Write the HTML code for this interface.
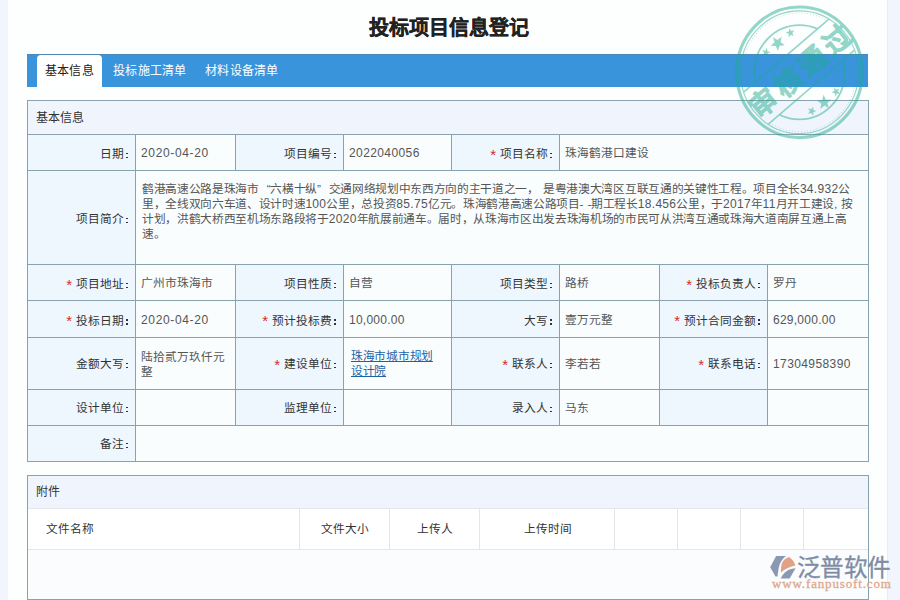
<!DOCTYPE html>
<html lang="zh-CN"><head><meta charset="utf-8">
<style>
*{margin:0;padding:0;box-sizing:border-box}
html,body{width:900px;height:600px;overflow:hidden}
body{background:#f1f5fd;font-family:"Liberation Sans",sans-serif;font-size:11.7px;color:#333;position:relative}
.a{position:absolute}
.main{position:absolute;left:8px;top:0;width:879px;height:600px;background:#fdfefe}
.title{position:absolute;left:0;top:14px;width:897px;text-align:center;font-size:20px;font-weight:bold;color:#222;line-height:28px;letter-spacing:0;-webkit-text-stroke:.35px #222}
.tabbar{position:absolute;left:27px;top:54px;width:841px;height:33px;background:#3a94dc;border-top:1px solid #4a88b8}
.tab{position:absolute;top:0;height:32px;line-height:32px;color:#fff;letter-spacing:.3px;font-size:12px}
.tab.act{background:#fff;color:#222;border-radius:4px 4px 0 0;left:10px;width:65px;text-align:center}
.lab{display:flex;align-items:center;color:#333;white-space:nowrap}
.v{display:flex;align-items:center;color:#555;line-height:15px}
.link span{color:#1c64a8;text-decoration:underline;letter-spacing:-.3px}
.star{color:#d9281f;margin-right:4px;font-size:15px;position:relative;top:2px;line-height:12px}
.cl{display:inline-block;position:relative;width:2px;height:12px;margin-left:2px}
.cl:before,.cl:after{content:"";position:absolute;left:0;width:1.6px;height:1.8px;background:#333}
.cl:before{top:6.2px}.cl:after{top:10.2px}
.n{font-size:12px;letter-spacing:.4px;line-height:10px}
.h12{font-size:12px}
.qo,.qc{display:inline-block;width:11.65px}
.qo{text-align:right}
.desc{letter-spacing:-.33px;word-spacing:1.5px}
.desc .n{letter-spacing:.3px}
.n.d{letter-spacing:.65px}
.n.m{letter-spacing:.25px}
</style></head><body>
<div class="main"></div><div class="a" style="left:887px;top:0;width:1px;height:600px;background:#e9edf2"></div>
<div class="title">投标项目信息登记</div>
<div class="tabbar">
  <div class="tab act">基本信息</div>
  <div class="tab" style="left:86px">投标施工清单</div>
  <div class="tab" style="left:178px">材料设备清单</div>
</div>
<div class="a" style="left:27px;top:100px;width:841px;height:34px;background:#f0f5fd"></div>
<div class="a t h12" style="left:36px;top:101px;height:34px;line-height:34px;color:#333">基本信息</div>
<div class="a" style="left:27px;top:134px;width:108px;height:36px;background:#eff7fe"></div>
<div class="a lab" style="right:772px;top:135px;height:35px">日期<i class="cl"></i></div>
<div class="a" style="left:135px;top:134px;width:100px;height:36px;background:#f9fdfe"></div>
<div class="a v" style="left:141px;top:135px;height:35px;width:86px"><span><span class="n d">2020-04-20</span></span></div>
<div class="a" style="left:235px;top:134px;width:108px;height:36px;background:#eff7fe"></div>
<div class="a lab" style="right:564px;top:135px;height:35px">项目编号<i class="cl"></i></div>
<div class="a" style="left:343px;top:134px;width:108px;height:36px;background:#f9fdfe"></div>
<div class="a v" style="left:349px;top:135px;height:35px;width:94px"><span><span class="n">2022040056</span></span></div>
<div class="a" style="left:451px;top:134px;width:108px;height:36px;background:#eff7fe"></div>
<div class="a lab" style="right:348px;top:135px;height:35px"><span class="star">*</span>项目名称<i class="cl"></i></div>
<div class="a" style="left:559px;top:134px;width:309px;height:36px;background:#f9fdfe"></div>
<div class="a v" style="left:565px;top:135px;height:35px;width:295px"><span>珠海鹤港口建设</span></div>
<div class="a" style="left:27px;top:170px;width:108px;height:94px;background:#eff7fe"></div>
<div class="a lab" style="right:772px;top:171px;height:93px">项目简介<i class="cl"></i></div>
<div class="a" style="left:135px;top:170px;width:733px;height:94px;background:#f9fdfe"></div>
<div class="a" style="left:27px;top:264px;width:108px;height:36px;background:#eff7fe"></div>
<div class="a lab" style="right:772px;top:265px;height:35px"><span class="star">*</span>项目地址<i class="cl"></i></div>
<div class="a" style="left:135px;top:264px;width:100px;height:36px;background:#f9fdfe"></div>
<div class="a v" style="left:141px;top:265px;height:35px;width:86px"><span>广州市珠海市</span></div>
<div class="a" style="left:235px;top:264px;width:108px;height:36px;background:#eff7fe"></div>
<div class="a lab" style="right:564px;top:265px;height:35px">项目性质<i class="cl"></i></div>
<div class="a" style="left:343px;top:264px;width:108px;height:36px;background:#f9fdfe"></div>
<div class="a v" style="left:349px;top:265px;height:35px;width:94px"><span>自营</span></div>
<div class="a" style="left:451px;top:264px;width:108px;height:36px;background:#eff7fe"></div>
<div class="a lab" style="right:348px;top:265px;height:35px">项目类型<i class="cl"></i></div>
<div class="a" style="left:559px;top:264px;width:100px;height:36px;background:#f9fdfe"></div>
<div class="a v" style="left:565px;top:265px;height:35px;width:86px"><span>路桥</span></div>
<div class="a" style="left:659px;top:264px;width:108px;height:36px;background:#eff7fe"></div>
<div class="a lab" style="right:140px;top:265px;height:35px"><span class="star">*</span>投标负责人<i class="cl"></i></div>
<div class="a" style="left:767px;top:264px;width:101px;height:36px;background:#f9fdfe"></div>
<div class="a v" style="left:773px;top:265px;height:35px;width:87px"><span>罗丹</span></div>
<div class="a" style="left:27px;top:300px;width:108px;height:37px;background:#eff7fe"></div>
<div class="a lab" style="right:772px;top:301px;height:36px"><span class="star">*</span>投标日期<i class="cl"></i></div>
<div class="a" style="left:135px;top:300px;width:100px;height:37px;background:#f9fdfe"></div>
<div class="a v" style="left:141px;top:301px;height:36px;width:86px"><span><span class="n d">2020-04-20</span></span></div>
<div class="a" style="left:235px;top:300px;width:108px;height:37px;background:#eff7fe"></div>
<div class="a lab" style="right:564px;top:301px;height:36px"><span class="star">*</span>预计投标费<i class="cl"></i></div>
<div class="a" style="left:343px;top:300px;width:108px;height:37px;background:#f9fdfe"></div>
<div class="a v" style="left:349px;top:301px;height:36px;width:94px"><span><span class="n m">10,000.00</span></span></div>
<div class="a" style="left:451px;top:300px;width:108px;height:37px;background:#eff7fe"></div>
<div class="a lab" style="right:348px;top:301px;height:36px">大写<i class="cl"></i></div>
<div class="a" style="left:559px;top:300px;width:100px;height:37px;background:#f9fdfe"></div>
<div class="a v" style="left:565px;top:301px;height:36px;width:86px"><span>壹万元整</span></div>
<div class="a" style="left:659px;top:300px;width:108px;height:37px;background:#eff7fe"></div>
<div class="a lab" style="right:140px;top:301px;height:36px"><span class="star">*</span>预计合同金额<i class="cl"></i></div>
<div class="a" style="left:767px;top:300px;width:101px;height:37px;background:#f9fdfe"></div>
<div class="a v" style="left:773px;top:301px;height:36px;width:87px"><span><span class="n m">629,000.00</span></span></div>
<div class="a" style="left:27px;top:337px;width:108px;height:52px;background:#eff7fe"></div>
<div class="a lab" style="right:772px;top:337px;height:51px">金额大写<i class="cl"></i></div>
<div class="a" style="left:135px;top:337px;width:100px;height:52px;background:#f9fdfe"></div>
<div class="a v" style="left:141px;top:338px;height:51px;width:86px"><span>陆拾贰万玖仟元<br>整</span></div>
<div class="a" style="left:235px;top:337px;width:108px;height:52px;background:#eff7fe"></div>
<div class="a lab" style="right:564px;top:337px;height:51px"><span class="star">*</span>建设单位<i class="cl"></i></div>
<div class="a" style="left:343px;top:337px;width:108px;height:52px;background:#f9fdfe"></div>
<div class="a v link" style="left:351px;top:337px;height:51px;width:94px"><span>珠海市城市规划<br>设计院</span></div>
<div class="a" style="left:451px;top:337px;width:108px;height:52px;background:#eff7fe"></div>
<div class="a lab" style="right:348px;top:337px;height:51px"><span class="star">*</span>联系人<i class="cl"></i></div>
<div class="a" style="left:559px;top:337px;width:100px;height:52px;background:#f9fdfe"></div>
<div class="a v" style="left:565px;top:338px;height:51px;width:86px"><span>李若若</span></div>
<div class="a" style="left:659px;top:337px;width:108px;height:52px;background:#eff7fe"></div>
<div class="a lab" style="right:140px;top:337px;height:51px"><span class="star">*</span>联系电话<i class="cl"></i></div>
<div class="a" style="left:767px;top:337px;width:101px;height:52px;background:#f9fdfe"></div>
<div class="a v" style="left:773px;top:338px;height:51px;width:87px"><span><span class="n">17304958390</span></span></div>
<div class="a" style="left:27px;top:389px;width:108px;height:36px;background:#eff7fe"></div>
<div class="a lab" style="right:772px;top:389px;height:35px">设计单位<i class="cl"></i></div>
<div class="a" style="left:135px;top:389px;width:100px;height:36px;background:#f9fdfe"></div>
<div class="a" style="left:235px;top:389px;width:108px;height:36px;background:#eff7fe"></div>
<div class="a lab" style="right:564px;top:389px;height:35px">监理单位<i class="cl"></i></div>
<div class="a" style="left:343px;top:389px;width:108px;height:36px;background:#f9fdfe"></div>
<div class="a" style="left:451px;top:389px;width:108px;height:36px;background:#eff7fe"></div>
<div class="a lab" style="right:348px;top:389px;height:35px">录入人<i class="cl"></i></div>
<div class="a" style="left:559px;top:389px;width:100px;height:36px;background:#f9fdfe"></div>
<div class="a v" style="left:565px;top:390px;height:35px;width:86px"><span>马东</span></div>
<div class="a" style="left:659px;top:389px;width:108px;height:36px;background:#eff7fe"></div>
<div class="a" style="left:767px;top:389px;width:101px;height:36px;background:#f9fdfe"></div>
<div class="a" style="left:27px;top:425px;width:108px;height:36px;background:#eff7fe"></div>
<div class="a lab" style="right:772px;top:425px;height:35px">备注<i class="cl"></i></div>
<div class="a" style="left:135px;top:425px;width:733px;height:36px;background:#f9fdfe"></div>
<div class="a desc" style="left:142px;top:181px;line-height:15px;white-space:nowrap;color:#555">鹤港高速公路是珠海市<span class="qo">“</span>六横十纵<span class="qc">”</span>交通网络规划中东西方向的主干道之一， 是粤港澳大湾区互联互通的关键性工程。项目全长<span class="n">34.932</span>公<br>里，全线双向六车道、设计时速<span class="n">100</span>公里，总投资<span class="n">85.75</span>亿元。珠海鹤港高速公路项目- -期工程长<span class="n">18.456</span>公里，于<span class="n">2017</span>年<span class="n">11</span>月开工建设, 按<br>计划，洪鹤大桥西至机场东路段将于<span class="n">2020</span>年航展前通车。届时，从珠海市区出发去珠海机场的市民可从洪湾互通或珠海大道南屏互通上高<br>速。</div>
<div class="a" style="left:27px;top:100px;width:842px;height:1px;background:#89a3ae"></div>
<div class="a" style="left:27px;top:134px;width:842px;height:1px;background:#89a3ae"></div>
<div class="a" style="left:27px;top:170px;width:842px;height:1px;background:#89a3ae"></div>
<div class="a" style="left:27px;top:264px;width:842px;height:1px;background:#89a3ae"></div>
<div class="a" style="left:27px;top:300px;width:842px;height:1px;background:#89a3ae"></div>
<div class="a" style="left:27px;top:337px;width:842px;height:1px;background:#89a3ae"></div>
<div class="a" style="left:27px;top:389px;width:842px;height:1px;background:#89a3ae"></div>
<div class="a" style="left:27px;top:425px;width:842px;height:1px;background:#89a3ae"></div>
<div class="a" style="left:27px;top:461px;width:842px;height:1px;background:#89a3ae"></div>
<div class="a" style="left:27px;top:134px;width:1px;height:36px;background:#89a3ae"></div>
<div class="a" style="left:135px;top:134px;width:1px;height:36px;background:#89a3ae"></div>
<div class="a" style="left:235px;top:134px;width:1px;height:36px;background:#89a3ae"></div>
<div class="a" style="left:343px;top:134px;width:1px;height:36px;background:#89a3ae"></div>
<div class="a" style="left:451px;top:134px;width:1px;height:36px;background:#89a3ae"></div>
<div class="a" style="left:559px;top:134px;width:1px;height:36px;background:#89a3ae"></div>
<div class="a" style="left:868px;top:134px;width:1px;height:36px;background:#89a3ae"></div>
<div class="a" style="left:27px;top:170px;width:1px;height:94px;background:#89a3ae"></div>
<div class="a" style="left:135px;top:170px;width:1px;height:94px;background:#89a3ae"></div>
<div class="a" style="left:868px;top:170px;width:1px;height:94px;background:#89a3ae"></div>
<div class="a" style="left:27px;top:264px;width:1px;height:36px;background:#89a3ae"></div>
<div class="a" style="left:135px;top:264px;width:1px;height:36px;background:#89a3ae"></div>
<div class="a" style="left:235px;top:264px;width:1px;height:36px;background:#89a3ae"></div>
<div class="a" style="left:343px;top:264px;width:1px;height:36px;background:#89a3ae"></div>
<div class="a" style="left:451px;top:264px;width:1px;height:36px;background:#89a3ae"></div>
<div class="a" style="left:559px;top:264px;width:1px;height:36px;background:#89a3ae"></div>
<div class="a" style="left:659px;top:264px;width:1px;height:36px;background:#89a3ae"></div>
<div class="a" style="left:767px;top:264px;width:1px;height:36px;background:#89a3ae"></div>
<div class="a" style="left:868px;top:264px;width:1px;height:36px;background:#89a3ae"></div>
<div class="a" style="left:27px;top:300px;width:1px;height:37px;background:#89a3ae"></div>
<div class="a" style="left:135px;top:300px;width:1px;height:37px;background:#89a3ae"></div>
<div class="a" style="left:235px;top:300px;width:1px;height:37px;background:#89a3ae"></div>
<div class="a" style="left:343px;top:300px;width:1px;height:37px;background:#89a3ae"></div>
<div class="a" style="left:451px;top:300px;width:1px;height:37px;background:#89a3ae"></div>
<div class="a" style="left:559px;top:300px;width:1px;height:37px;background:#89a3ae"></div>
<div class="a" style="left:659px;top:300px;width:1px;height:37px;background:#89a3ae"></div>
<div class="a" style="left:767px;top:300px;width:1px;height:37px;background:#89a3ae"></div>
<div class="a" style="left:868px;top:300px;width:1px;height:37px;background:#89a3ae"></div>
<div class="a" style="left:27px;top:337px;width:1px;height:52px;background:#89a3ae"></div>
<div class="a" style="left:135px;top:337px;width:1px;height:52px;background:#89a3ae"></div>
<div class="a" style="left:235px;top:337px;width:1px;height:52px;background:#89a3ae"></div>
<div class="a" style="left:343px;top:337px;width:1px;height:52px;background:#89a3ae"></div>
<div class="a" style="left:451px;top:337px;width:1px;height:52px;background:#89a3ae"></div>
<div class="a" style="left:559px;top:337px;width:1px;height:52px;background:#89a3ae"></div>
<div class="a" style="left:659px;top:337px;width:1px;height:52px;background:#89a3ae"></div>
<div class="a" style="left:767px;top:337px;width:1px;height:52px;background:#89a3ae"></div>
<div class="a" style="left:868px;top:337px;width:1px;height:52px;background:#89a3ae"></div>
<div class="a" style="left:27px;top:389px;width:1px;height:36px;background:#89a3ae"></div>
<div class="a" style="left:135px;top:389px;width:1px;height:36px;background:#89a3ae"></div>
<div class="a" style="left:235px;top:389px;width:1px;height:36px;background:#89a3ae"></div>
<div class="a" style="left:343px;top:389px;width:1px;height:36px;background:#89a3ae"></div>
<div class="a" style="left:451px;top:389px;width:1px;height:36px;background:#89a3ae"></div>
<div class="a" style="left:559px;top:389px;width:1px;height:36px;background:#89a3ae"></div>
<div class="a" style="left:659px;top:389px;width:1px;height:36px;background:#89a3ae"></div>
<div class="a" style="left:767px;top:389px;width:1px;height:36px;background:#89a3ae"></div>
<div class="a" style="left:868px;top:389px;width:1px;height:36px;background:#89a3ae"></div>
<div class="a" style="left:27px;top:425px;width:1px;height:36px;background:#89a3ae"></div>
<div class="a" style="left:135px;top:425px;width:1px;height:36px;background:#89a3ae"></div>
<div class="a" style="left:868px;top:425px;width:1px;height:36px;background:#89a3ae"></div>
<div class="a" style="left:27px;top:100px;width:1px;height:34px;background:#89a3ae"></div>
<div class="a" style="left:868px;top:100px;width:1px;height:34px;background:#89a3ae"></div>
<div class="a" style="left:27px;top:475px;width:842px;height:125px;background:#fafcfd;border:1px solid #89a3ae"></div>
<div class="a" style="left:28px;top:476px;width:840px;height:32px;background:#eff4fd"></div>
<div class="a t h12" style="left:36px;top:475px;height:34px;line-height:34px;color:#333">附件</div>
<div class="a" style="left:28px;top:508px;width:840px;height:42px;background:#fff;border-top:1px solid #e3e6ea;border-bottom:1px solid #e3e6ea"></div>
<div class="a" style="left:299px;top:508px;width:1px;height:41px;background:#e3e6ea"></div>
<div class="a" style="left:389px;top:508px;width:1px;height:41px;background:#e3e6ea"></div>
<div class="a" style="left:479px;top:508px;width:1px;height:41px;background:#e3e6ea"></div>
<div class="a" style="left:614px;top:508px;width:1px;height:41px;background:#e3e6ea"></div>
<div class="a" style="left:677px;top:508px;width:1px;height:41px;background:#e3e6ea"></div>
<div class="a" style="left:740px;top:508px;width:1px;height:41px;background:#e3e6ea"></div>
<div class="a" style="left:803px;top:508px;width:1px;height:41px;background:#e3e6ea"></div>
<div class="a t" style="left:46px;top:509px;height:40px;line-height:40px;color:#333">文件名称</div>
<div class="a t" style="left:300px;top:509px;width:90px;height:40px;line-height:40px;text-align:center;color:#333">文件大小</div>
<div class="a t" style="left:390px;top:509px;width:90px;height:40px;line-height:40px;text-align:center;color:#333">上传人</div>
<div class="a t" style="left:480px;top:509px;width:135px;height:40px;line-height:40px;text-align:center;color:#333">上传时间</div>
<svg class="a" style="left:760px;top:545px" width="140" height="55" viewBox="760 545 140 55">
<g fill="#8a98b2">
<path d="M776.1,556.1 L786,556.1 C782.5,558.8 779.6,563 778.7,568 C778.2,571 777.8,574 777.5,576.4 L775.5,576.4 L770.2,567.2 Z"/>
<path d="M795.6,568.2 L789.6,578.6 L780.7,578.6 C782.6,574.5 785.6,571.2 789.5,569.6 C791.3,568.9 793.4,568.4 795.6,568.2 Z"/>
</g>
<path fill="#e0a184" d="M789.6,557.3 C792.3,559.3 794.4,562.2 795.4,565.4 C790.5,566.2 784.8,568.6 780.9,572.6 C780.8,568.5 781.2,564.4 782.8,561.6 C784.6,559 787,557.4 789.6,557.3 Z"/>
<text x="797" y="576" fill="#7f8ca5" stroke="#7f8ca5" stroke-width=".3" style="font-size:23.6px;letter-spacing:-0.6px;font-family:'Liberation Sans',sans-serif">泛普软件</text>
<text x="772" y="587.6" fill="#dfa78c" stroke="#dfa78c" stroke-width=".3" style="font-size:13px;letter-spacing:.85px;font-family:'Liberation Serif',serif">www.fanpusoft.com</text>
</svg>

<svg class="a" style="left:0;top:0;pointer-events:none" width="900" height="160" viewBox="0 0 900 160">
<defs><clipPath id="ob"><polygon points="-281.54,-27.11 27.11,-281.54 141.09,-143.27 -167.56,111.17"/><polygon points="-142.49,141.57 166.16,-112.86 281.54,27.11 -27.11,281.54"/></clipPath></defs>
<g opacity=".47" transform="translate(799.5,72.3) scale(1,1.04)" fill="none" stroke="rgb(30,170,140)">
<circle r="62.8" stroke-width="3.1"/>
<circle r="59" stroke-width="1.1"/>
<g clip-path="url(#ob)">
<circle r="57" stroke-width="1" stroke-dasharray="0.8 2.2" opacity=".7"/>
<circle r="45.3" stroke-width="1.8"/>
</g>
<g stroke-width="1.6"><line x1="-55.83" y1="19.07" x2="29.37" y2="-51.17"/><line x1="-31.37" y1="49.97" x2="55.04" y2="-21.26"/></g>
<g fill="rgb(30,170,140)" stroke="none"><polygon points="-37.50,-21.31 -34.30,-20.80 -32.57,-23.54 -32.07,-20.34 -28.93,-19.55 -31.82,-18.08 -31.60,-14.85 -33.89,-17.15 -36.90,-15.94 -35.42,-18.82"/><polygon points="-26.46,-33.81 -22.01,-31.09 -17.77,-34.12 -18.98,-29.05 -14.78,-25.95 -19.98,-25.53 -21.64,-20.59 -23.64,-25.40 -28.85,-25.44 -24.89,-28.83"/><polygon points="-10.17,-42.45 -8.36,-39.77 -5.18,-40.38 -7.17,-37.83 -5.60,-34.99 -8.65,-36.10 -10.86,-33.73 -10.75,-36.97 -13.69,-38.34 -10.57,-39.24"/><polygon points="13.74,41.68 11.71,39.15 8.59,40.03 10.37,37.32 8.57,34.62 11.70,35.47 13.70,32.93 13.86,36.17 16.90,37.29 13.87,38.44"/><polygon points="29.50,34.57 24.94,32.04 20.83,35.25 21.83,30.13 17.51,27.21 22.68,26.58 24.12,21.56 26.32,26.29 31.54,26.11 27.72,29.67"/><polygon points="40.69,20.85 37.47,20.47 35.87,23.29 35.23,20.11 32.06,19.46 34.88,17.87 34.52,14.65 36.91,16.84 39.86,15.50 38.51,18.45"/>
<g transform="translate(0.70,0.29) rotate(-39.5)"><text x="3" y="0" text-anchor="middle" stroke="rgb(30,170,140)" stroke-width="0.7" style="font-size:27.5px;font-weight:900;letter-spacing:4.6px" font-family="Liberation Sans, sans-serif" dominant-baseline="central">审核通过</text></g>
</g>
</g></svg>
</body></html>
